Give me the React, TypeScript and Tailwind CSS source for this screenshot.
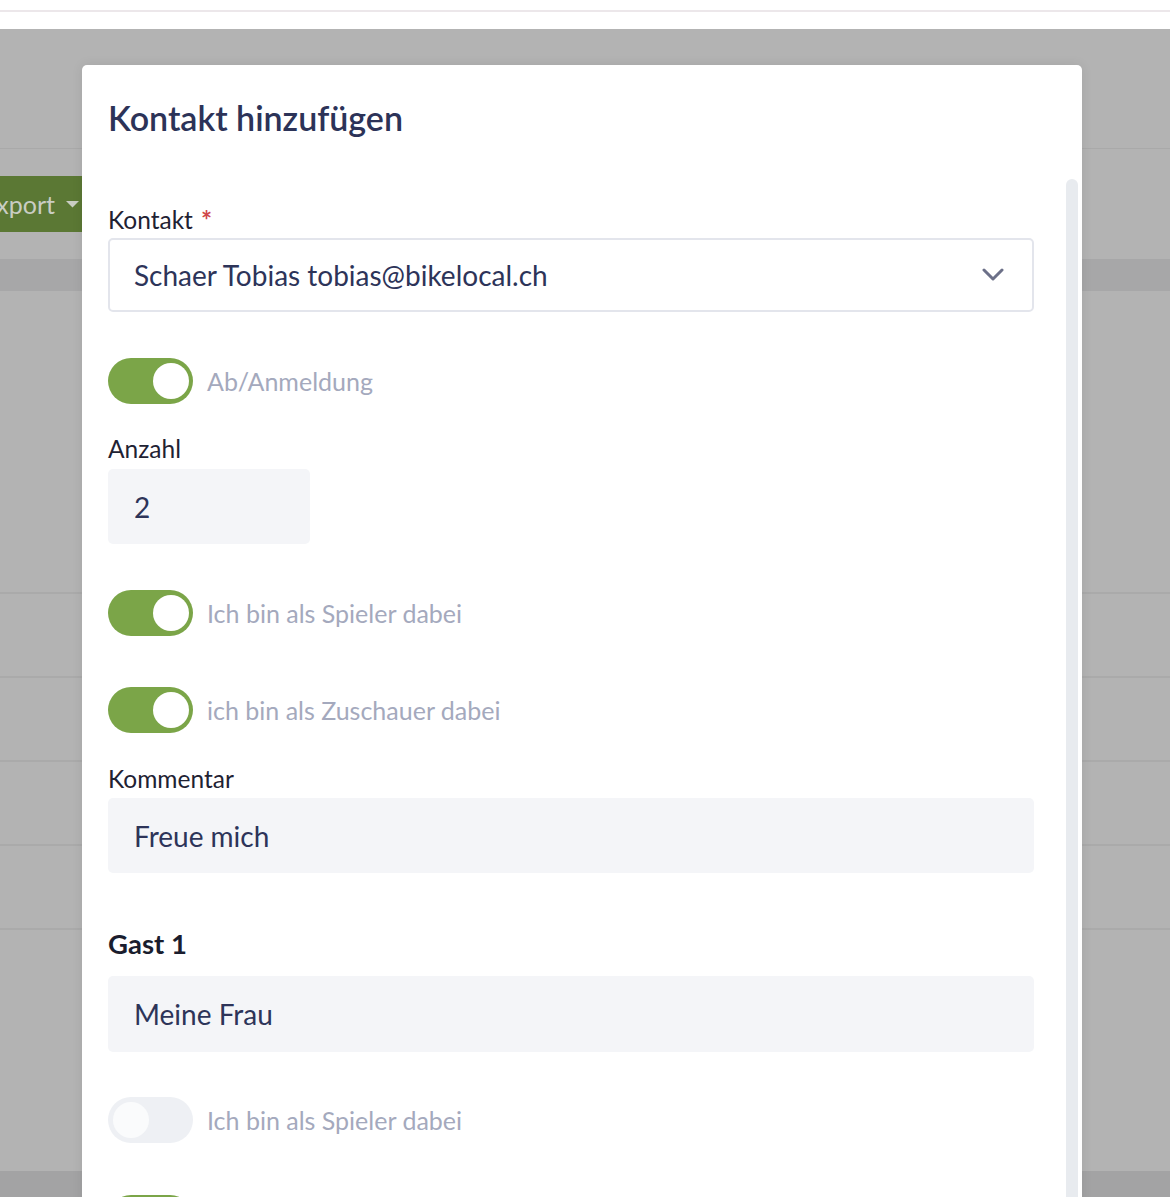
import React from "react";

function Toggle({ on, label }: { on: boolean; label?: string }) {
  return (
    <div className="flex items-center gap-[14px]">
      <div
        className={
          on
            ? "w-[85px] h-[46px] rounded-full bg-[#7ba548] flex items-center justify-end pr-[4px]"
            : "w-[85px] h-[46px] rounded-full bg-[#eef0f4] flex items-center justify-start pl-[5px]"
        }
      >
        <div className={on ? "w-[36px] h-[36px] rounded-full bg-white" : "w-[36px] h-[36px] rounded-full bg-[#fafbfc]"} />
      </div>
      {label ? <span className="text-[25px] leading-[30px] text-[#a4a9bd]">{label}</span> : null}
    </div>
  );
}

export default function App() {
  const font = { fontFamily: '"Lato", "Open Sans", sans-serif' };
  return (
    <div className="relative w-full h-[1197px] overflow-hidden bg-white" style={font}>
      {/* top white strip */}
      <div className="h-[29px] bg-white">
        <div className="h-[10px]" />
        <div className="h-[2px] bg-[#ece7ea]" />
      </div>
      {/* dimmed page */}
      <div className="h-[1168px] bg-[#b3b3b3] flex flex-col">
        <div className="h-[120px] border-b border-[#a9a9a9]" />
        <div className="mt-[27px] h-[56px] w-[82px] bg-[#5b7834] flex items-center justify-end pr-[3px] gap-[11px] overflow-hidden">
          <span className="shrink-0 text-[25px] leading-[30px] text-[#c9cdc3] whitespace-nowrap">Export</span>
          <svg className="shrink-0" width="13" height="7" viewBox="0 0 13 7">
            <path d="M0 0 L13 0 L6.5 6.5 Z" fill="#c9cdc3" />
          </svg>
        </div>
        <div className="mt-[27px] h-[32px] bg-[#a7a7a8]" />
        <div className="h-[303px] border-b-2 border-[#aaaaaa]" />
        <div className="h-[84px] border-b-2 border-[#aaaaaa]" />
        <div className="h-[84px] border-b-2 border-[#aaaaaa]" />
        <div className="h-[84px] border-b-2 border-[#aaaaaa]" />
        <div className="h-[84px] border-b-2 border-[#aaaaaa]" />
        <div className="flex-1" />
        <div className="h-[26px] bg-[#a3a3a4]" />
      </div>

      {/* modal */}
      <div className="absolute left-[82px] top-[65px] w-[1000px] h-[1200px] bg-white rounded-t-[5px] shadow-[0_0_12px_rgba(0,0,0,0.08)]">
        <div className="px-[26px] pt-[32px]">
          <h2 className="text-[34px] leading-[42px] font-semibold text-[#2c3358]">Kontakt hinzufügen</h2>
        </div>
        <div className="absolute right-[4px] top-[114px] w-[12px] h-[1100px] rounded-t-full bg-[#e8ebef]" />
        <div className="ml-[26px] w-[926px] flex flex-col">
          <div className="mt-[66px] flex items-center text-[24.5px] leading-[30px] text-[#1f2233]">
            Kontakt<span className="ml-[8px] text-[26px] font-bold text-[#d0474a]">*</span>
          </div>
          <div className="mt-[3px] h-[74px] rounded-[5px] border-2 border-[#e3e5ec] flex items-center justify-between pl-[24px] pr-[28px]">
            <span className="text-[28px] text-[#2d3459]">Schaer Tobias tobias@bikelocal.ch</span>
            <svg width="22" height="14" viewBox="0 0 22 14">
              <path d="M2 2 L11 11 L20 2" fill="none" stroke="#6c7088" strokeWidth="3" strokeLinecap="round" strokeLinejoin="round" />
            </svg>
          </div>
          <div className="mt-[46px]">
            <Toggle on label="Ab/Anmeldung" />
          </div>
          <div className="mt-[30px] text-[24.5px] leading-[30px] text-[#1f2233]">Anzahl</div>
          <div className="mt-[5px] w-[202px] h-[75px] rounded-[5px] bg-[#f4f5f8] flex items-center pl-[26px] text-[28px] text-[#2d3459]">2</div>
          <div className="mt-[46px]">
            <Toggle on label="Ich bin als Spieler dabei" />
          </div>
          <div className="mt-[51px]">
            <Toggle on label="ich bin als Zuschauer dabei" />
          </div>
          <div className="mt-[31px] text-[24.5px] leading-[30px] text-[#1f2233]">Kommentar</div>
          <div className="mt-[4px] h-[75px] rounded-[5px] bg-[#f4f5f8] flex items-center pl-[26px] text-[28px] text-[#2d3459]">Freue mich</div>
          <div className="mt-[55px] text-[27.5px] leading-[32px] font-bold text-[#1a1d2e]">Gast 1</div>
          <div className="mt-[16px] h-[76px] rounded-[5px] bg-[#f4f5f8] flex items-center pl-[26px] text-[28px] text-[#2d3459]">Meine Frau</div>
          <div className="mt-[45px]">
            <Toggle on={false} label="Ich bin als Spieler dabei" />
          </div>
          <div className="mt-[52px]">
            <Toggle on />
          </div>
        </div>
      </div>
    </div>
  );
}
